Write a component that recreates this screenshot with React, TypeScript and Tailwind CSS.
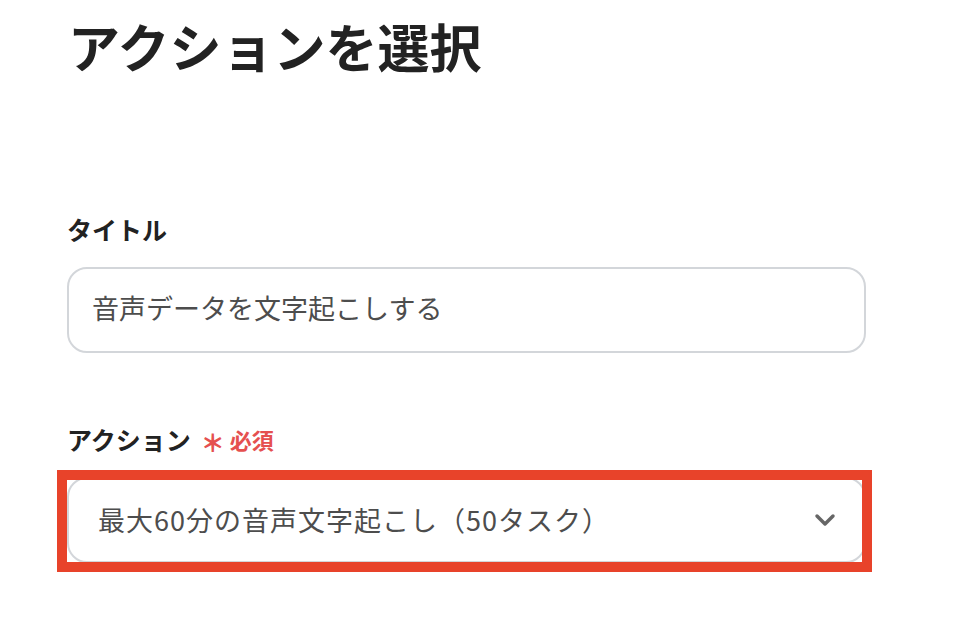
import { ChevronDown } from 'lucide-react';

const font = { fontFamily: '"Noto Sans CJK JP", "Noto Sans", sans-serif' };

function FieldLabel({ text, required }: { text: string; required?: boolean }) {
    return (
        <div className="flex items-center h-[32px]">
            <span className="text-[25px] leading-[32px] font-bold text-[#222]">{text}</span>
            {required && (
                <span className="ml-[10px] flex items-center text-[#e5504f] font-bold">
                    <span className="text-[24px] leading-[32px] mt-[6px] font-black">＊</span>
                    <span className="ml-[5px] text-[22px] leading-[32px]">必須</span>
                </span>
            )}
        </div>
    );
}

export default function App() {
    return (
        <div className="min-h-[619px] bg-white pl-[67px] pt-[15px]" style={font}>
            <div className="w-[799px]">
                <h1 className="text-[52px] leading-[62px] font-bold text-[#222] ml-[1px]">アクションを選択</h1>

                <div className="mt-[136px]">
                    <FieldLabel text="タイトル" />
                    <div className="mt-[22px] h-[86px] rounded-[20px] border-2 border-[#d3d6da] flex items-center pl-[23px]">
                        <span className="text-[27px] text-[#4d4d4d] -mt-[3px]">音声データを文字起こしする</span>
                    </div>
                </div>

                <div className="mt-[70px]">
                    <FieldLabel text="アクション" required />
                    <div className="relative mt-[22px]">
                        <div className="h-[86px] rounded-[20px] border-2 border-[#d3d6da] flex items-center justify-between pl-[29px] pr-[23px]">
                            <span className="text-[27px] tracking-[1px] text-[#4d4d4d]">最大60分の音声文字起こし（50タスク）</span>
                            <ChevronDown className="w-[32px] h-[32px] text-[#666]" strokeWidth={2.6} />
                        </div>
                        <div className="absolute left-[-10px] right-[-6px] top-[-7px] bottom-[-9px] border-[10px] border-[#e8432a] pointer-events-none" />
                    </div>
                </div>
            </div>
        </div>
    );
}
